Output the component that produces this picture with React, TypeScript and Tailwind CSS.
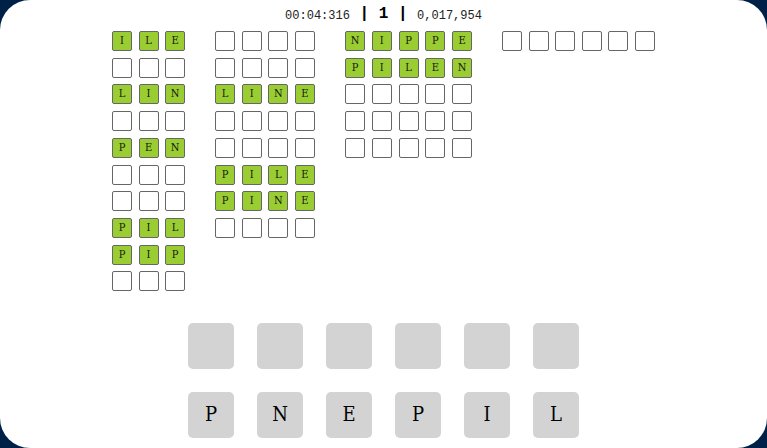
type Group = { width: string; letters: number; rows: string[] };

const groups: Group[] = [
  { width: "w-[73px]", letters: 3, rows: ["ILE", "", "LIN", "", "PEN", "", "", "PIL", "PIP", ""] },
  { width: "w-[100px]", letters: 4, rows: ["", "", "LINE", "", "", "PILE", "PINE", ""] },
  { width: "w-[127px]", letters: 5, rows: ["NIPPE", "PILEN", "", "", ""] },
  { width: "w-[153px]", letters: 6, rows: [""] },
];

const rack = ["P", "N", "E", "P", "I", "L"];

function Tile({ letter }: { letter?: string }) {
  return (
    <span
      className={`flex size-5 items-center justify-center rounded-xs border border-[#666] pb-px text-[11px] leading-none text-[#151515] ${
        letter ? "bg-[#9acd32]" : "bg-white"
      }`}
    >
      {letter}
    </span>
  );
}

function WordGroup({ group }: { group: Group }) {
  return (
    <div className={`grid h-[267px] grid-rows-10 items-start ${group.width}`}>
      {group.rows.map((word, row) => (
        <div key={row} className="flex justify-between">
          {Array.from({ length: group.letters }, (_, i) => (
            <Tile key={i} letter={word[i]} />
          ))}
        </div>
      ))}
    </div>
  );
}

export default function App() {
  return (
    <div className="min-h-screen bg-[#002147]">
      <main className="flex min-h-screen flex-col items-center rounded-[30px] bg-white font-['DejaVu_Serif_Condensed','DejaVu_Serif',serif] text-black">
        <header className="flex h-[31px] items-center whitespace-pre font-['Liberation_Mono',monospace] text-xs text-[#222]">
          <span>00:04:316</span>
          <strong className="pb-1 text-base text-black">{" | 1 | "}</strong>
          <span>0,017,954</span>
        </header>
        <section aria-label="Words" className="flex items-start gap-[30px]">
          {groups.map((group) => (
            <WordGroup key={group.letters} group={group} />
          ))}
        </section>
        <section aria-label="Letters" className="mt-[25px] grid grid-cols-6 gap-[23px] text-xl">
          {rack.map((_, i) => (
            <button key={i} type="button" aria-label={`Slot ${i + 1}`} className="size-[46px] rounded-[5px] bg-[#d3d3d3]" />
          ))}
          {rack.map((letter, i) => (
            <button key={i} type="button" className="size-[46px] rounded-[5px] bg-[#d3d3d3] pb-0.5">
              {letter}
            </button>
          ))}
        </section>
      </main>
    </div>
  );
}
